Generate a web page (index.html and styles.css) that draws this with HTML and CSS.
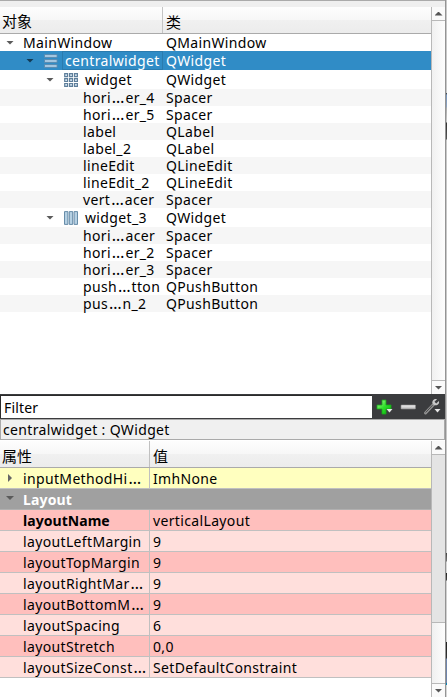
FILE: index.html
```html
<!DOCTYPE html>
<html lang="zh-CN">
<head>
<meta charset="utf-8">
<title>Object Inspector</title>
<link rel="stylesheet" href="styles.css">
</head>
<body>
<div class="window">
<main class="dock">
  <div class="dock-top"></div>
  <section class="pane tree-pane">
    <div class="view tree">
      <div class="head"><span class="c1">对象</span><span class="c2">类</span></div>
      <div class="row"><span class="c1 l0"><i class="arrow"></i><b>MainWindow</b></span><span class="c2">QMainWindow</span></div>
      <div class="row tall selected"><span class="c1 l1"><i class="arrow"></i>
        <svg class="icon" width="14" height="14" viewBox="0 0 14 14"><g fill="#a3c6e0" stroke="#5686ab" stroke-width=".8"><path d="M.5 .5h12.6v3H.5zM.5 5.500h12.600v3H.5zM.5 10.500h12.600v3H.5z"/></g></svg><b class="focus">centralwidget</b></span><span class="c2">QWidget</span></div>
      <div class="row tall"><span class="c1 l2"><i class="arrow"></i>
        <svg class="icon" width="14" height="14" viewBox="0 0 14 14"><g fill="#d3e4f0" stroke="#5f7f9b" stroke-width="1.200"><path d="M.7 .7h2.900v2.900H.7zM5.600 .7h2.900v2.900H5.600zM10.500 .7h2.900v2.900h-2.900zM.7 5.600h2.900v2.900H.7zM5.600 5.600h2.900v2.900H5.600zM10.500 5.600h2.900v2.900h-2.900zM.7 10.500h2.900v2.900H.7zM5.600 10.500h2.900v2.900H5.600zM10.500 10.500h2.900v2.900h-2.900z"/></g></svg><b>widget</b></span><span class="c2">QWidget</span></div>
      <div class="row alt"><span class="c1 l3">hori<em>…</em>er_4</span><span class="c2">Spacer</span></div>
      <div class="row"><span class="c1 l3">hori<em>…</em>er_5</span><span class="c2">Spacer</span></div>
      <div class="row alt"><span class="c1 l3">label</span><span class="c2">QLabel</span></div>
      <div class="row"><span class="c1 l3">label_2</span><span class="c2">QLabel</span></div>
      <div class="row alt"><span class="c1 l3">lineEdit</span><span class="c2">QLineEdit</span></div>
      <div class="row"><span class="c1 l3">lineEdit_2</span><span class="c2">QLineEdit</span></div>
      <div class="row alt"><span class="c1 l3">vert<em>…</em>acer</span><span class="c2">Spacer</span></div>
      <div class="row tall"><span class="c1 l2"><i class="arrow"></i>
        <svg class="icon" width="14" height="14" viewBox="0 0 14 14"><g fill="#b5d0e3" stroke="#5b82a0" stroke-width=".9"><path d="M.5 .6h3.400v12.800H.5zM5.300 .6h3.400v12.800H5.300zM10.100 .6h3.400v12.800h-3.400z"/></g></svg><b>widget_3</b></span><span class="c2">QWidget</span></div>
      <div class="row alt"><span class="c1 l3">hori<em>…</em>acer</span><span class="c2">Spacer</span></div>
      <div class="row"><span class="c1 l3">hori<em>…</em>er_2</span><span class="c2">Spacer</span></div>
      <div class="row alt"><span class="c1 l3">hori<em>…</em>er_3</span><span class="c2">Spacer</span></div>
      <div class="row"><span class="c1 l3">push<em>…</em>tton</span><span class="c2">QPushButton</span></div>
      <div class="row alt"><span class="c1 l3">pus<em>…</em>n_2</span><span class="c2">QPushButton</span></div>
    </div>
    <div class="scroll"><div class="btn"><i class="up"></i></div><div class="thumb"></div><div class="btn down-btn"><i class="down"></i></div></div>
  </section>
  <div class="toolbar">
    <div class="filter">Filter</div>
    <svg class="tools" width="73" height="25" viewBox="0 0 73 25">
      <defs>
        <linearGradient id="green" x2="1" y2="1"><stop offset="0" stop-color="#b4f79a"/><stop offset=".5" stop-color="#2ee02a"/><stop offset="1" stop-color="#08a80c"/></linearGradient>
        <linearGradient id="silver" x2="0" y2="1"><stop offset="0" stop-color="#f4f4f4"/><stop offset="1" stop-color="#b5b5b5"/></linearGradient>
      </defs>
      <path d="M10 6h4v5h5v4h-5v5h-4v-5H5v-4h5z" fill="url(#green)" stroke="#17a81b" stroke-width=".8"/>
      <path d="M14.500 15h6L17.500 18.500z" fill="#e8e8e8"/>
      <rect x="29" y="11" width="14.500" height="4" rx=".6" fill="url(#silver)" stroke="#8d8d8d" stroke-width=".6"/>
      <path d="M53.500 19 L62 10" stroke="#929292" stroke-width="3" stroke-linecap="round"/>
      <path d="M53.700 18.500 L60.500 11.200" stroke="#353535" stroke-width=".8"/>
      <path d="M65 5.200 L62.500 7.700 L64.200 9.500 L66.800 7 C68 10 65 12 62.200 11 L60.400 9.300 C59.800 6.500 62.500 4.300 65 5.200z" fill="#c9c9c9"/>
      <path d="M62.500 15h6L65.500 18.500z" fill="#e8e8e8"/>
    </svg>
  </div>
  <div class="object-name">centralwidget : QWidget</div>
  <section class="pane prop-pane">
    <div class="view props">
      <div class="head"><span class="c1">属性</span><span class="c2">值</span></div>
      <div class="prow yellow"><i class="right"></i><span class="c1">inputMethodHi<em>…</em></span><span class="c2">ImhNone</span></div>
      <div class="prow group"><i class="arrow"></i><span class="c1">Layout</span></div>
      <div class="prow dark changed"><span class="c1">layoutName</span><span class="c2">verticalLayout</span></div>
      <div class="prow"><span class="c1">layoutLeftMargin</span><span class="c2">9</span></div>
      <div class="prow dark"><span class="c1">layoutTopMargin</span><span class="c2">9</span></div>
      <div class="prow"><span class="c1">layoutRightMar<em>…</em></span><span class="c2">9</span></div>
      <div class="prow dark"><span class="c1">layoutBottomM<em>…</em></span><span class="c2">9</span></div>
      <div class="prow"><span class="c1">layoutSpacing</span><span class="c2">6</span></div>
      <div class="prow dark"><span class="c1">layoutStretch</span><span class="c2">0,0</span></div>
      <div class="prow"><span class="c1">layoutSizeConst<em>…</em></span><span class="c2">SetDefaultConstraint</span></div>
    </div>
    <div class="scroll"><div class="btn"><i class="up"></i></div><div class="track"></div><div class="thumb short"></div><div class="btn down-btn"><i class="down"></i></div></div>
  </section>
</main>
<div class="edge"></div>
</div>
</body>
</html>
```
FILE: styles.css
```css
* { box-sizing: border-box; }
body {
  margin: 0;
  background: #fff;
  color: #000;
  font: 14px/17px "Noto Sans", "Noto Sans CJK SC", sans-serif;
  letter-spacing: .35px;
  overflow: hidden;
}
b, i { font-weight: inherit; font-style: normal; }
em { font-style: normal; display: inline-block; width: 14.5px; letter-spacing: 0; text-align: center; font-size: 16px; line-height: 1px; }
.window { display: flex; width: 447px; height: 697px; }
.dock { width: 445px; display: flex; flex-direction: column; }
.edge {
  width: 2px;
  border-left: 1px solid #949494;
  background: linear-gradient(#c8c8c8 93px, #333 93px, #7796bd 95px, #8fa3bd 107px, #aaa 108px, #c8c8c8 122px, #333 123px, #555 139px, #c8c8c8 140px, #c8c8c8 553px, #444 553px, #777 561px, #d5d5d5 562px, #d5d5d5 573px, #222 573px, #444 580px, #d0d0d0 581px, #d0d0d0 642px, #222 642px, #333 658px, #6d83ab 659px, #6d83ab 683px, #0785b5 683px, #0785b5 685px, #d5d5d5 685px);
}
.dock-top { height: 7px; background: #efefef; border-top: 1px solid #aaa; }
.pane { display: flex; }
.tree-pane { height: 387px; }
.prop-pane { height: 256px; }
.view { width: 431px; }
.head {
  display: flex;
  height: 27px;
  line-height: 29px;
  font-family: "Noto Sans CJK SC", sans-serif;
  font-size: 15px;
  letter-spacing: 0;
  border-bottom: 1px solid #aaa;
  background: linear-gradient(#fdfdfd, #f7f7f7 48%, #f0f0f0 52%, #ececec);
}
.head .c1 { padding-left: 2px; border-right: 1px solid #c4c4c4; }
.head .c2 { padding-left: 3px; }
.tree .c1 { width: 163px; flex: none; display: flex; align-items: center; white-space: nowrap; }
.row { display: flex; height: 17px; }
.row .c2 { padding-left: 3px; }
.tall { height: 19px; line-height: 19px; }
.alt { background: #f6f6f6; }
.selected { background: #308cc6; color: #fff; }
.l0 { padding-left: 6px; }
.l1 { padding-left: 26px; }
.l2 { padding-left: 46px; }
.l3 { padding-left: 83px; }
.l0 b { margin-left: 9px; }
.l2 b { margin-left: 7px; }
.icon { margin-left: 10px; flex: none; }
.arrow { flex: none; width: 8px; height: 4px; background: #5a5a5a; clip-path: polygon(0 0, 100% 0, 50% 100%); }
.selected .arrow { background: #123a55; }
.focus { margin-left: 4px; width: 101px; height: 19px; padding-left: 2px; line-height: 17px; border: 1px solid #2a7bae; }
.scroll {
  width: 14px;
  display: flex;
  flex-direction: column;
  border-left: 1px solid #b8b8b8;
}
.btn { height: 14px; flex: none; background: #fafafa; border-bottom: 1px solid #b8b8b8; display: flex; align-items: center; justify-content: center; }
.down-btn { border-bottom: 0; border-top: 1px solid #b8b8b8; }
.up, .down { width: 8px; height: 4px; background: #555; }
.up { clip-path: polygon(50% 0, 100% 100%, 0 100%); }
.down { clip-path: polygon(0 0, 100% 0, 50% 100%); }
.thumb { flex: 1; background: linear-gradient(90deg, #f0f0f0, #fdfdfd); }
.short { flex: none; height: 60px; }
.track { flex: 1; background: #e4e4e4; border-bottom: 1px solid #b8b8b8; }
.toolbar { height: 25px; flex: none; display: flex; background: #3b3c3e; }
.filter { width: 372px; height: 23px; margin-top: 1px; padding-left: 3px; line-height: 24px; letter-spacing: .15px; background: #fff; border: 1px solid #2b2b2b; border-right: 0; border-bottom: 0; }
.object-name { height: 21px; flex: none; padding-left: 2px; line-height: 20px; background: #f0f0f0; border: 1px solid #aaa; margin-bottom: 1px; }
.props .c1 { width: 150px; flex: none; white-space: nowrap; border-right: 1px solid #c0c0c0; }
.props .c2 { padding-left: 3px; }
.prow { display: flex; height: 21px; line-height: 22px; border-bottom: 1px solid #c0c0c0; background: #ffdfdc; position: relative; }
.prow .c1 { padding-left: 23px; height: 20px; }
.prow.dark { background: #ffbfbd; }
.prow.yellow { background: #ffffbf; line-height: 21px; }
.prow.group { background: #a0a0a0; color: #fff; font-weight: 700; border-bottom-color: #b0b0b0; }
.group .c1 { border: 0; letter-spacing: .15px; }
.changed .c1 { font-weight: 700; letter-spacing: .05px; }
.prow i { position: absolute; left: 6px; top: 7px; }
.prow .right { left: 8px; top: 6px; width: 4px; height: 8px; background: #666; clip-path: polygon(0 0, 100% 50%, 0 100%); }
```
